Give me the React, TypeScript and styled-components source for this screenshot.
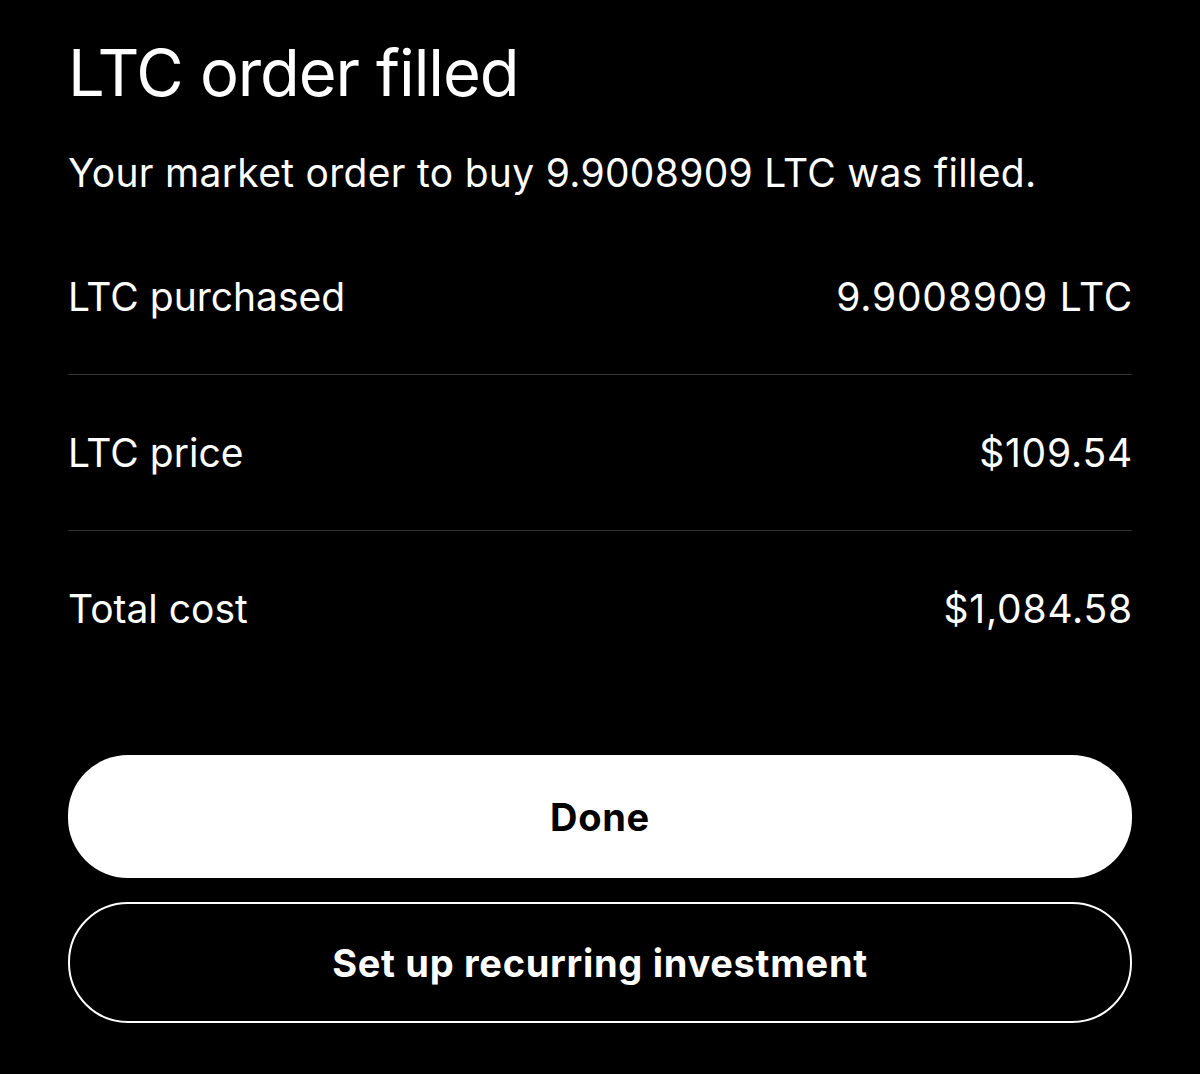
import React from "react";
import styled, { createGlobalStyle } from "styled-components";

const GlobalStyle = createGlobalStyle`
  html, body {
    margin: 0;
    padding: 0;
    background: #000;
  }
  body {
    font-family: Inter, "Noto Sans", "Liberation Sans", sans-serif;
    color: #fff;
    -webkit-font-smoothing: antialiased;
  }
`;

const Screen = styled.main`
  width: 1200px;
  height: 1074px;
  box-sizing: border-box;
  background: #000;
  padding: 33px 68px 0 68px;
  display: flex;
  flex-direction: column;
  overflow: hidden;
`;

const Title = styled.h1`
  margin: 0;
  font-size: 65px;
  line-height: 80px;
  font-weight: 400;
  letter-spacing: -1.1px;
`;

const Subtitle = styled.p`
  margin: 37px 0 0 0;
  font-size: 39px;
  line-height: 46px;
  font-weight: 400;
  letter-spacing: 0.3px;
`;

const List = styled.section`
  margin-top: 23px;
  display: flex;
  flex-direction: column;
`;

const Row = styled.div<{ $last?: boolean }>`
  height: 156px;
  box-sizing: border-box;
  display: flex;
  align-items: center;
  justify-content: space-between;
  border-bottom: 1px solid ${(p) => (p.$last ? "transparent" : "#333336")};
`;

const Label = styled.span`
  font-size: 39px;
  line-height: 48px;
`;

const Value = styled.span`
  font-size: 39px;
  line-height: 48px;
  text-align: right;
  letter-spacing: 0.8px;
  margin-right: -1px;
`;

const Actions = styled.div`
  margin-top: 68px;
  display: flex;
  flex-direction: column;
  gap: 24px;
`;

const Button = styled.button<{ $variant: "solid" | "outline" }>`
  width: 100%;
  box-sizing: border-box;
  border-radius: 60px;
  font-family: Inter, "Noto Sans", "Liberation Sans", sans-serif;
  font-size: 38px;
  font-weight: 700;
  letter-spacing: 0.7px;
  cursor: pointer;
  display: flex;
  align-items: center;
  justify-content: center;
  height: ${(p) => (p.$variant === "solid" ? "123px" : "121px")};
  background: ${(p) => (p.$variant === "solid" ? "#fff" : "#000")};
  color: ${(p) => (p.$variant === "solid" ? "#000" : "#fff")};
  border: ${(p) => (p.$variant === "solid" ? "none" : "2px solid #fff")};
`;

const rows = [
  { label: "LTC purchased", value: "9.9008909 LTC" },
  { label: "LTC price", value: "$109.54" },
  { label: "Total cost", value: "$1,084.58" },
];

export default function App() {
  return (
    <>
      <GlobalStyle />
      <Screen>
        <Title>LTC order filled</Title>
        <Subtitle>Your market order to buy 9.9008909 LTC was filled.</Subtitle>
        <List>
          {rows.map((r, i) => (
            <Row key={r.label} $last={i === rows.length - 1}>
              <Label>{r.label}</Label>
              <Value>{r.value}</Value>
            </Row>
          ))}
        </List>
        <Actions>
          <Button $variant="solid">Done</Button>
          <Button $variant="outline">Set up recurring investment</Button>
        </Actions>
      </Screen>
    </>
  );
}
